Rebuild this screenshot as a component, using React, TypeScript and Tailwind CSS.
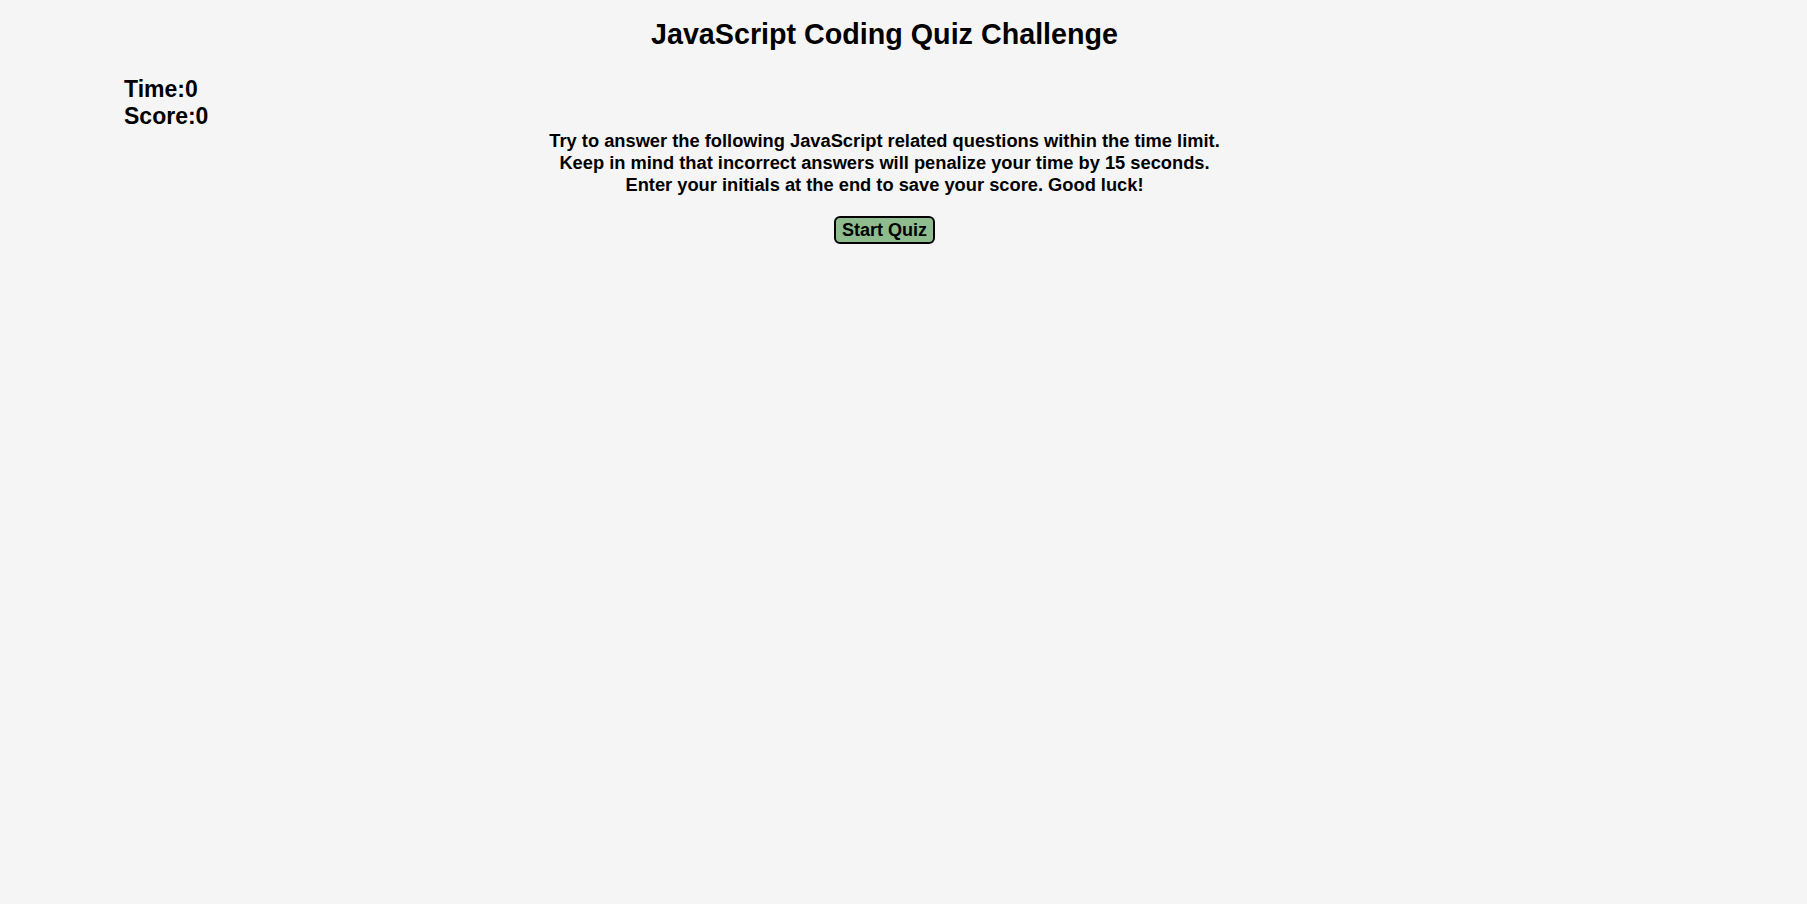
import React, { useState } from 'react';

const App: React.FC = () => {
  const [time] = useState(0);
  const [score] = useState(0);

  return (
    <div className="min-h-screen bg-[#f5f5f5] text-black font-['Liberation_Sans',Arial,sans-serif] font-bold">
      {/* Title */}
      <header className="pt-[17px] pr-[38px]">
        <h1 className="text-center text-[28.7px] leading-[34px]">JavaScript Coding Quiz Challenge</h1>
      </header>

      {/* Timer + score */}
      <div className="mt-[25px] pl-[124px] text-[23px] leading-[27px]">
        <div>Time:{time}</div>
        <div>Score:{score}</div>
      </div>

      {/* Intro */}
      <main className="pr-[38px] flex flex-col items-center">
        <p className="text-center text-[18.3px] leading-[22px]">
          Try to answer the following JavaScript related questions within the time limit.
          <br />
          Keep in mind that incorrect answers will penalize your time by 15 seconds.
          <br />
          Enter your initials at the end to save your score. Good luck!
        </p>
        <button className="mt-[20px] px-[6px] py-[2px] text-[18px] leading-[20px] bg-[#8fbc8f] border-2 border-black rounded-[6px]">
          Start Quiz
        </button>
      </main>
    </div>
  );
};

export default App;
